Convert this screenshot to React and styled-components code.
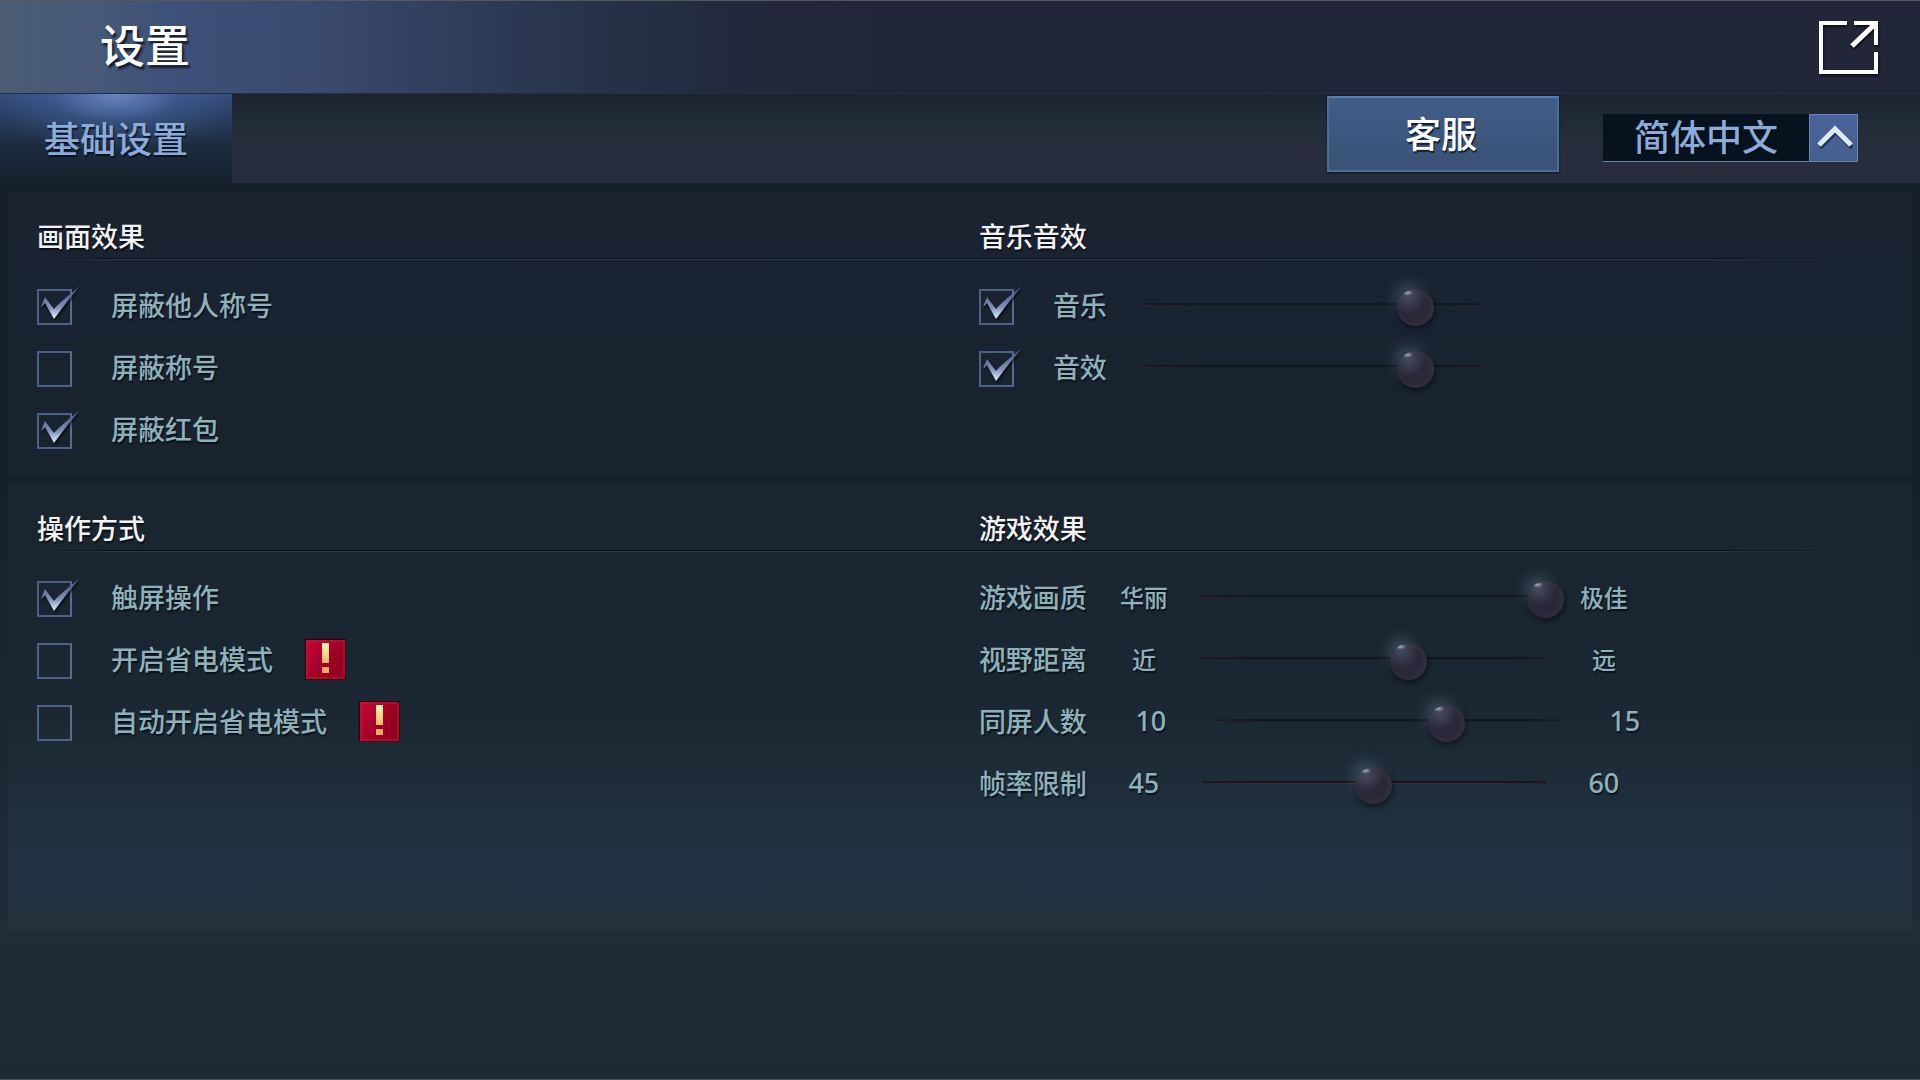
import React, { useState } from "react";
import styled, { createGlobalStyle, css } from "styled-components";

const GlobalStyle = createGlobalStyle`
  *, *::before, *::after { box-sizing: border-box; }
  body {
    margin: 0;
    background: #1e2a33;
    font-family: "Noto Sans CJK SC", sans-serif;
    font-size: 27px;
    font-weight: 500;
    line-height: 32px;
    color: #8fb1b9;
  }
  button, input, select { font: inherit; color: inherit; margin: 0; }
`;

const textShadow = "1px 2px 1px rgba(4, 10, 18, 0.75)";

const Page = styled.div`
  min-height: 100vh;
  border-bottom: 1px solid #46525c;
  background: linear-gradient(
    #16202a 0%, #15202a 45%, #1b2833 70%, #212c38 86%, #1d2b36 93%, #1e2a32 100%
  );
`;

const Header = styled.header`
  display: flex;
  align-items: center;
  justify-content: space-between;
  height: 94px;
  padding: 0 41px 0 100px;
  border-top: 1px solid #57585f;
  border-bottom: 1px solid #262f40;
  background: linear-gradient(
    90deg, #4a5b73 0, #475977 100px, #3e5178 160px, #3b4b70 300px,
    #303e5b 450px, #263047 620px, #22283a 760px, #212638 900px
  );
`;

const Title = styled.h1`
  margin: 0;
  padding-bottom: 6px;
  font-size: 45px;
  line-height: 60px;
  font-weight: 500;
  color: #fff;
  text-shadow: 2px 3px 2px rgba(10, 18, 34, 0.8);
`;

const ExitButton = styled.button`
  display: flex;
  padding: 0;
  border: 0;
  background: none;
  cursor: pointer;
  filter: drop-shadow(1px 2px 1px rgba(0, 0, 0, 0.6));
`;

const TabBar = styled.nav`
  display: flex;
  align-items: flex-start;
  height: 89px;
  background: linear-gradient(#1b2330 0, #222b38 28px, #272d3c 58px, #272d3c 100%);
`;

const Tab = styled.button`
  width: 232px;
  height: 89px;
  padding: 0 0 4px;
  border: 0;
  font-size: 36px;
  line-height: 48px;
  font-weight: 500;
  color: #8babdb;
  text-shadow: ${textShadow};
  background:
    radial-gradient(ellipse 130px 58px at 50% 0, rgba(118, 148, 212, 0.8), rgba(80, 115, 180, 0.35) 50%, transparent),
    linear-gradient(#34497a 0, #263a5a 28px, #1c2b3e 54px, #15202a 100%);
`;

const Tools = styled.div`
  display: flex;
  gap: 44px;
  margin-left: auto;
  padding: 2px 62px 0 0;
`;

const ServiceButton = styled.button`
  width: 232px;
  height: 76px;
  padding: 0 4px 4px 0;
  border: 2px solid #476e9f;
  border-top-color: #557fb4;
  font-size: 36px;
  line-height: 48px;
  font-weight: 500;
  color: #fff;
  text-shadow: ${textShadow};
  background: linear-gradient(#415d88, #3d567d 55%, #3a5274);
  box-shadow: 0 1px 2px rgba(0, 0, 0, 0.6);
`;

const Language = styled.div`
  display: flex;
  height: 48px;
  margin-top: 18px;
  border-bottom: 1px solid #6c7f9b;
`;

const LanguageSelect = styled.select`
  width: 206px;
  padding: 0 0 6px;
  border: 0;
  border-radius: 0;
  appearance: none;
  font-size: 36px;
  line-height: 40px;
  font-weight: 500;
  text-align-last: center;
  color: #8babdb;
  background: #06121d;
  text-shadow: ${textShadow};
`;

const LanguageToggle = styled.button`
  display: grid;
  place-items: center;
  width: 49px;
  padding: 0 0 4px 2px;
  border: 1px solid #6985b3;
  border-bottom: 0;
  background: linear-gradient(#4a629b, #44608f);
`;

const Panels = styled.main`
  display: grid;
  gap: 8px;
  padding: 9px 8px 0;
`;

const Panel = styled.section`
  padding: 28px 52px ${(p) => (p.$last ? 113 : 14)}px 29px;
  background: ${(p) =>
    p.$last
      ? "linear-gradient(#1a2530, #1a2631 45%, #1e2d39 68%, #243343 88%, #25333e)"
      : "linear-gradient(#1b2331, #1a2331 45%, #19242e)"};
`;

const columns = css`
  display: grid;
  grid-template-columns: 31fr 29fr;
`;

const Headings = styled.div`
  ${columns}
  padding-bottom: 8px;
  background:
    linear-gradient(90deg, transparent, #0b1118 4%, #0b1118 92%, transparent) 0 calc(100% - 1px) / 100% 1px no-repeat,
    linear-gradient(90deg, transparent, #27344b 4%, #27344b 92%, transparent) 0 100% / 100% 1px no-repeat;
`;

const Heading = styled.h2`
  margin: 0;
  font-size: 27px;
  line-height: 32px;
  font-weight: 500;
  color: #f2f2f2;
  text-shadow: ${textShadow};
`;

const Columns = styled.div`
  ${columns}
  padding-top: 16px;
`;

const Row = styled.div`
  display: flex;
  align-items: center;
  height: 62px;
`;

const CheckLabel = styled.label`
  display: flex;
  align-items: center;
  gap: 39px;
  cursor: pointer;
`;

const CheckFrame = styled.span`
  position: relative;
  display: flex;
`;

const CheckInput = styled.input`
  width: 35px;
  height: 36px;
  appearance: none;
  border: 2px solid #4d6088;
  border-right-color: #5c6b8b;
`;

const CheckMark = styled.svg`
  position: absolute;
  left: 0;
  top: -5px;
  pointer-events: none;
  filter: drop-shadow(1px 2px 1px rgba(0, 0, 0, 0.7));
`;

const LabelText = styled.span`
  padding-bottom: 4px;
  text-shadow: ${textShadow};
`;

const Alert = styled.button`
  display: grid;
  place-items: center;
  width: 41px;
  height: 41px;
  margin: -4px 0 0 32px;
  padding: 0 2px 2px 0;
  border: 1px solid #2c0007;
  background: linear-gradient(120deg, #c3093a, #9c0024 60%, #8f0020);
  box-shadow: inset 0 0 0 2px rgba(214, 20, 50, 0.45);
`;

const Range = styled.input.attrs({ type: "range" })`
  width: 380px;
  height: 38px;
  appearance: none;
  background:
    linear-gradient(90deg, #151c28, #10171f 18%, #10171f 88%, #161d28) 18px 15px / 344px 2px no-repeat,
    linear-gradient(
      90deg, #35202c, ${(p) => (p.$warm ? "#4a2a2c" : "#18202b")} 16%,
      ${(p) => (p.$warm ? "#4a2a2c" : "#18202b")} 85%, #241f2b
    ) 18px 17px / 344px 1px no-repeat;

  &::-webkit-slider-thumb {
    appearance: none;
    width: 37px;
    height: 37px;
    border: 0;
    border-radius: 50%;
    background:
      radial-gradient(ellipse 6px 3px at 28% 10%, rgba(200, 212, 226, 0.7) 0, transparent 100%),
      radial-gradient(circle at 30% 18%, rgba(92, 100, 122, 0.6) 0, transparent 45%),
      radial-gradient(circle at 45% 48%, #2b283c 0, #2a2739 50%, #36333f 80%, #4a4750 100%);
    box-shadow:
      1px 3px 5px rgba(5, 10, 18, 0.6),
      -7px -10px 14px -5px rgba(120, 145, 160, 0.36);
  }
`;

const SliderName = styled.label`
  width: 108px;
  margin-right: 25px;
  padding-bottom: 4px;
  text-shadow: ${textShadow};
`;

const Bound = styled.span`
  width: ${(p) => (p.$wide ? 78 : 64)}px;
  padding-bottom: 4px;
  font-family: ${(p) => (p.$number ? '"Noto Sans", ' : "")}"Noto Sans CJK SC", sans-serif;
  font-size: ${(p) => (p.$number ? 27 : 24)}px;
  text-align: center;
  text-shadow: ${textShadow};
`;

const Bounded = styled.div`
  display: flex;
  align-items: center;
  gap: 8px;
`;

const Volume = styled.div`
  display: flex;
  align-items: center;
  gap: 16px;
`;

function Check({ label, initial = false }) {
  const [on, setOn] = useState(initial);
  return (
    <CheckLabel>
      <CheckFrame>
        <CheckInput type="checkbox" checked={on} onChange={(e) => setOn(e.target.checked)} />
        {on && (
          <CheckMark width="46" height="40" viewBox="0 -5 46 40" aria-hidden="true">
            <defs>
              <linearGradient id="tick" x1="0" y1="-3" x2="0" y2="30" gradientUnits="userSpaceOnUse">
                <stop offset="0" stopColor="#465578" />
                <stop offset="0.35" stopColor="#63729c" />
                <stop offset="0.65" stopColor="#8391bd" />
                <stop offset="0.85" stopColor="#b9cde4" />
                <stop offset="1" stopColor="#e4f3fb" />
              </linearGradient>
            </defs>
            <path d="M4 18 L8 8 L17 20 Q22 14 43 -3 Q35 6 17 30 L8 14 Z" fill="url(#tick)" />
          </CheckMark>
        )}
      </CheckFrame>
      <LabelText>{label}</LabelText>
    </CheckLabel>
  );
}

function Warning() {
  return (
    <Alert type="button" aria-label="!">
      <svg width="12" height="32" viewBox="0 0 12 32" aria-hidden="true">
        <defs>
          <linearGradient id="bang" x1="0" y1="0" x2="0" y2="1">
            <stop offset="0" stopColor="#fff6b8" />
            <stop offset="1" stopColor="#f5b565" />
          </linearGradient>
        </defs>
        <path d="M3 1h7v20H3z" fill="url(#bang)" />
        <path d="M3 25h7v6H3z" fill="#f6ad62" />
      </svg>
    </Alert>
  );
}

function VolumeRow({ label, value }) {
  return (
    <Row>
      <Volume>
        <Check label={label} initial />
        <Range defaultValue={value} aria-label={label} />
      </Volume>
    </Row>
  );
}

function SliderRow({ id, label, low, high, value, number, wide, warm }) {
  return (
    <Row>
      <SliderName htmlFor={id}>{label}</SliderName>
      <Bounded>
        <Bound $number={number} $wide={wide}>{low}</Bound>
        <Range id={id} defaultValue={value} $warm={warm} />
        <Bound $number={number} $wide={wide}>{high}</Bound>
      </Bounded>
    </Row>
  );
}

export default function App() {
  return (
    <Page>
      <GlobalStyle />
      <Header>
        <Title>设置</Title>
        <ExitButton type="button" aria-label="退出">
          <svg width="61" height="55" viewBox="0 0 61 55" fill="none" stroke="#fff" aria-hidden="true">
            <path d="M29 3H3V52H58V32" strokeWidth="4" />
            <path d="M36 3H58V25" strokeWidth="4" />
            <path d="M56 5L34 26" strokeWidth="5" />
            <path d="M49 2H59V12Z" fill="#fff" stroke="none" />
          </svg>
        </ExitButton>
      </Header>
      <TabBar>
        <Tab type="button">基础设置</Tab>
        <Tools>
          <ServiceButton type="button">客服</ServiceButton>
          <Language>
            <LanguageSelect aria-label="语言" defaultValue="zh">
              <option value="zh">简体中文</option>
            </LanguageSelect>
            <LanguageToggle type="button" aria-label="展开">
              <svg width="36" height="26" viewBox="0 0 36 26" aria-hidden="true">
                <path d="M3 25L19 9L35 25" fill="none" stroke="#22304e" strokeWidth="4" />
                <path d="M2 22L18 6L34 22" fill="none" stroke="#dcebfb" strokeWidth="5" />
              </svg>
            </LanguageToggle>
          </Language>
        </Tools>
      </TabBar>
      <Panels>
        <Panel>
          <Headings>
            <Heading>画面效果</Heading>
            <Heading>音乐音效</Heading>
          </Headings>
          <Columns>
            <div>
              <Row><Check label="屏蔽他人称号" initial /></Row>
              <Row><Check label="屏蔽称号" /></Row>
              <Row><Check label="屏蔽红包" initial /></Row>
            </div>
            <div>
              <VolumeRow label="音乐" value={80} />
              <VolumeRow label="音效" value={80} />
            </div>
          </Columns>
        </Panel>
        <Panel $last>
          <Headings>
            <Heading>操作方式</Heading>
            <Heading>游戏效果</Heading>
          </Headings>
          <Columns>
            <div>
              <Row><Check label="触屏操作" initial /></Row>
              <Row><Check label="开启省电模式" /><Warning /></Row>
              <Row><Check label="自动开启省电模式" /><Warning /></Row>
            </div>
            <div>
              <SliderRow id="quality" label="游戏画质" low="华丽" high="极佳" value={100} />
              <SliderRow id="distance" label="视野距离" low="近" high="远" value={60} />
              <SliderRow id="players" label="同屏人数" low="10" high="15" value={67} number wide />
              <SliderRow id="frames" label="帧率限制" low="45" high="60" value={50} number warm />
            </div>
          </Columns>
        </Panel>
      </Panels>
    </Page>
  );
}
